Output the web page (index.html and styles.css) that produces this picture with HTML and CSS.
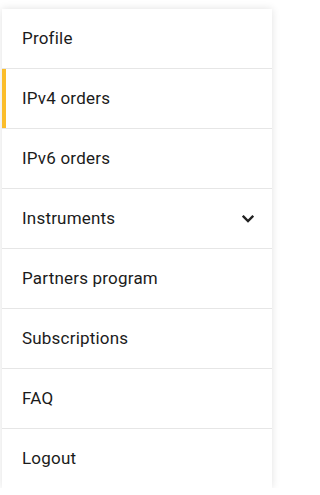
FILE: index.html
```html
<!DOCTYPE html>
<html lang="en">
<head>
<meta charset="utf-8">
<title>Menu</title>
<link rel="stylesheet" href="styles.css">
</head>
<body>
<nav class="menu">
  <ul class="menu-list">
    <li class="menu-item"><a class="menu-link" href="#">Profile</a></li>
    <li class="menu-item is-active"><a class="menu-link" href="#">IPv4 orders</a></li>
    <li class="menu-item"><a class="menu-link" href="#">IPv6 orders</a></li>
    <li class="menu-item"><a class="menu-link" href="#"><span>Instruments</span>
      <svg class="chevron" width="12" height="8" viewBox="0 0 12 8"><path d="M1.6 1.6 L6 6 L10.4 1.6" fill="none" stroke="#222" stroke-width="2.3" stroke-linecap="square"/></svg></a></li>
    <li class="menu-item"><a class="menu-link" href="#">Partners program</a></li>
    <li class="menu-item"><a class="menu-link" href="#">Subscriptions</a></li>
    <li class="menu-item"><a class="menu-link" href="#">FAQ</a></li>
    <li class="menu-item"><a class="menu-link" href="#">Logout</a></li>
  </ul>
</nav>
</body>
</html>
```
FILE: styles.css
```css
html, body {
  margin: 0;
  padding: 0;
  background: #ffffff;
}
body {
  padding: 9px 0 0 2px;
  font-family: Roboto, "Noto Sans", sans-serif;
}
.menu {
  width: 270px;
  background: #ffffff;
  box-shadow: 0 0 8px rgba(0, 0, 0, 0.12);
}
.menu-list {
  list-style: none;
  margin: 0;
  padding: 0;
}
.menu-item {
  border-bottom: 1px solid #e6e6e6;
  position: relative;
}
.menu-item:last-child {
  border-bottom: none;
}
.menu-item.is-active::before {
  content: "";
  position: absolute;
  left: 0;
  top: 0;
  bottom: 0;
  width: 4px;
  background: #fbbd2b;
}
.menu-link {
  display: flex;
  align-items: center;
  justify-content: space-between;
  box-sizing: border-box;
  height: 59px;
  padding: 0 18px 2px 20px;
  color: #1b1b1b;
  font-size: 17px;
  letter-spacing: 0.2px;
  text-decoration: none;
}
.chevron {
  display: block;
  margin-top: 2px;
}
```
